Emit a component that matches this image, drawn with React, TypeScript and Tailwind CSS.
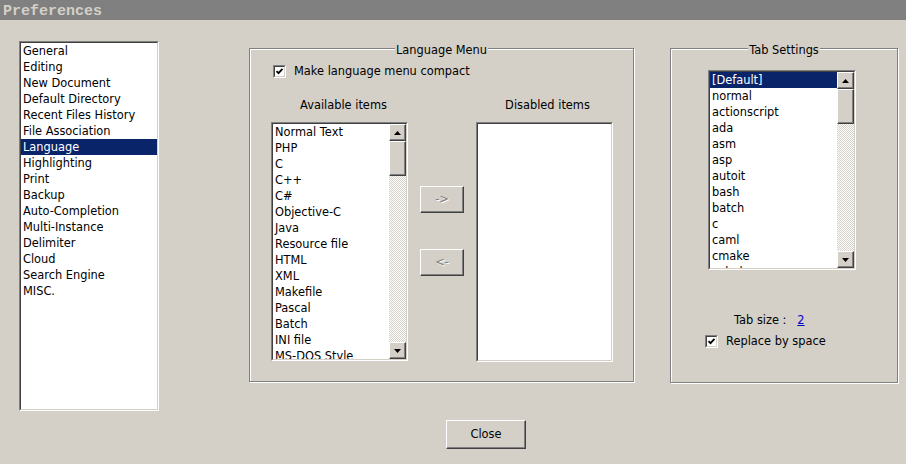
import React from 'react'

const ui = "font-['Tahoma','DejaVu_Sans',sans-serif] text-[11.4px] text-black"

interface BoxProps {
  className?: string
  children?: React.ReactNode
}

// classic sunken edge: gray/white outside, dark/face inside
const Sunken = ({ className = '', children }: BoxProps) => (
  <div className={`border border-t-[#808080] border-l-[#808080] border-b-white border-r-white ${className}`}>
    <div className="w-full h-full border border-t-[#404040] border-l-[#404040] border-b-[#d4d0c8] border-r-[#d4d0c8] bg-white overflow-hidden flex">
      {children}
    </div>
  </div>
)

const Raised = ({ className = '', children }: BoxProps) => (
  <div
    className={`border border-t-white border-l-white border-b-[#404040] border-r-[#404040] bg-[#d4d0c8] shadow-[inset_-1px_-1px_0_#808080] ${className}`}
  >
    {children}
  </div>
)

const Arrow = ({ down }: { down?: boolean }) => (
  <svg width="7" height="4" viewBox="0 0 7 4">
    {down ? <path d="M0 0h7L3.5 4z" fill="#000" /> : <path d="M0 4h7L3.5 0z" fill="#000" />}
  </svg>
)

const ScrollBar = () => (
  <div className="w-[17px] h-full flex flex-col shrink-0">
    <Raised className="h-[17px] flex items-center justify-center">
      <Arrow />
    </Raised>
    <Raised className="h-[35px]" />
    <div className="flex-1 bg-[repeating-conic-gradient(#d4d0c8_0_25%,#ffffff_0_50%)] bg-[length:2px_2px]" />
    <Raised className="h-[17px] flex items-center justify-center">
      <Arrow down />
    </Raised>
  </div>
)

interface ListProps {
  items: string[]
  selected?: number
  scroll?: boolean
  className?: string
}

const ListBox = ({ items, selected = -1, scroll, className = '' }: ListProps) => (
  <Sunken className={className}>
    <div className="flex-1 overflow-hidden">
      {items.map((it, i) => (
        <div
          key={it}
          className={`h-4 leading-[15px] pt-[1px] pl-[2px] whitespace-nowrap ${i === selected ? 'bg-[#0a246a] text-white' : ''}`}
        >
          {it}
        </div>
      ))}
    </div>
    {scroll && <ScrollBar />}
  </Sunken>
)

const CheckBox = ({ label }: { label: string }) => (
  <div className="flex items-center gap-2 h-[14px]">
    <Sunken className="w-[13px] h-[13px]">
      <svg width="9" height="9" viewBox="0 0 9 9">
        <path d="M1.5 4.2l2 2 4-4.4" fill="none" stroke="#000" strokeWidth="1.8" />
      </svg>
    </Sunken>
    <span className="pt-[1px]">{label}</span>
  </div>
)

const Group = ({ title, className = '', children }: BoxProps & { title: string }) => (
  <div className={`relative border border-[#808080] shadow-[inset_1px_1px_0_#ffffff,1px_1px_0_#ffffff] ${className}`}>
    <span className="absolute -top-[7px] left-0 right-0 flex justify-center">
      <span className="bg-[#d4d0c8] px-[1px] leading-4">{title}</span>
    </span>
    {children}
  </div>
)

const categories = [
  'General', 'Editing', 'New Document', 'Default Directory', 'Recent Files History',
  'File Association', 'Language', 'Highlighting', 'Print', 'Backup', 'Auto-Completion',
  'Multi-Instance', 'Delimiter', 'Cloud', 'Search Engine', 'MISC.',
]

const languages = [
  'Normal Text', 'PHP', 'C', 'C++', 'C#', 'Objective-C', 'Java', 'Resource file', 'HTML',
  'XML', 'Makefile', 'Pascal', 'Batch', 'INI file', 'MS-DOS Style',
]

const tabLangs = [
  '[Default]', 'normal', 'actionscript', 'ada', 'asm', 'asp', 'autoit', 'bash', 'batch',
  'c', 'caml', 'cmake', 'cobol',
]

const MoveButton = ({ label }: { label: string }) => (
  <Raised className="w-[44px] h-[27px] flex items-center justify-center">
    <span className="text-[#808080] [text-shadow:1px_1px_0_#ffffff]">{label}</span>
  </Raised>
)

export default function App() {
  return (
    <div className={`w-[906px] h-[464px] bg-[#d4d0c8] flex flex-col overflow-hidden ${ui}`}>
      <div className="h-[20px] bg-[#808080] pl-[3px] pt-[4px] overflow-hidden">
        <div className="font-['Liberation_Mono',monospace] font-bold text-[15px] leading-[15px] text-[#d4d0c8]">
          Preferences
        </div>
      </div>

      <div className="flex items-start h-[391px]">
        <ListBox items={categories} selected={6} className="ml-[19px] mt-[21px] w-[140px] h-[370px]" />

        <Group title="Language Menu" className="ml-[90px] mt-[28px] w-[385px] h-[334px] pl-[21px]">
          <div className="mt-[15px] ml-[2px]">
            <CheckBox label="Make language menu compact" />
          </div>
          <div className="flex mt-[18px]">
            <div className="w-[137px] flex flex-col">
              <div className="h-4 leading-4 pt-[1px] text-center pl-[8px]">Available items</div>
              <ListBox items={languages} scroll className="mt-[10px] w-[137px] h-[239px]" />
            </div>
            <div className="ml-[12px] flex flex-col pt-[90px] gap-[36px]">
              <MoveButton label="->" />
              <MoveButton label="<-" />
            </div>
            <div className="ml-[12px] w-[137px] flex flex-col">
              <div className="h-4 leading-4 pt-[1px] text-center pl-[6px]">Disabled items</div>
              <ListBox items={[]} className="mt-[10px] w-[137px] h-[240px]" />
            </div>
          </div>
        </Group>

        <Group title="Tab Settings" className="ml-[36px] mt-[28px] w-[228px] h-[335px]">
          <ListBox items={tabLangs} selected={0} scroll className="ml-[37px] mt-[21px] w-[148px] h-[200px]" />
          <div className="ml-[63px] mt-[41px] h-4 leading-4 pt-[1px] whitespace-pre">
            {'Tab size :   '}
            <span className="text-[#0000cc] underline">2</span>
          </div>
          <div className="ml-[34px] mt-[7px]">
            <CheckBox label="Replace by space" />
          </div>
        </Group>
      </div>

      <Raised className="ml-[446px] mt-[9px] w-[80px] h-[29px] flex items-center justify-center">
        Close
      </Raised>
    </div>
  )
}
